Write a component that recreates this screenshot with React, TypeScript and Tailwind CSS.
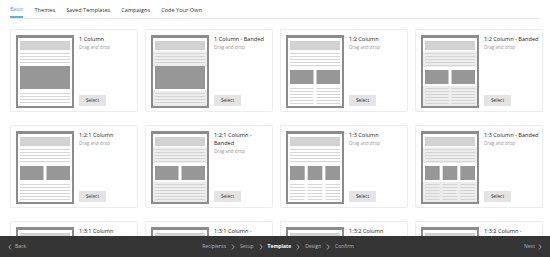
import React from "react";

type Thumb = { banded?: boolean; top: number; bottom: number };

const tabs = ["Basic", "Themes", "Saved Templates", "Campaigns", "Code Your Own"];

const templates: { name: string; thumb: Thumb }[] = [
  { name: "1 Column", thumb: { top: 1, bottom: 1 } },
  { name: "1 Column - Banded", thumb: { banded: true, top: 1, bottom: 1 } },
  { name: "1:2 Column", thumb: { top: 2, bottom: 2 } },
  { name: "1:2 Column - Banded", thumb: { banded: true, top: 2, bottom: 2 } },
  { name: "1:2:1 Column", thumb: { top: 2, bottom: 1 } },
  { name: "1:2:1 Column - Banded", thumb: { banded: true, top: 2, bottom: 1 } },
  { name: "1:3 Column", thumb: { top: 3, bottom: 3 } },
  { name: "1:3 Column - Banded", thumb: { banded: true, top: 3, bottom: 3 } },
  { name: "1:3:1 Column", thumb: { top: 3, bottom: 1 } },
  { name: "1:3:1 Column - Banded", thumb: { banded: true, top: 3, bottom: 1 } },
  { name: "1:3:2 Column", thumb: { top: 3, bottom: 2 } },
  { name: "1:3:2 Column - Banded", thumb: { banded: true, top: 3, bottom: 2 } },
];

const steps = ["Recipients", "Setup", "Template", "Design", "Confirm"];

// splits the inner width (4..54) into n columns with a 3px gutter
const columns = (n: number) => {
  const w = (50 - 3 * (n - 1)) / n;
  return Array.from({ length: n }, (_, i) => ({ x: 4 + i * (w + 3), w }));
};

function Lines({ ys, cols }: { ys: number[]; cols: number }) {
  return (
    <>
      {columns(cols).map((c, i) =>
        ys.map((y) => <rect key={`${i}-${y}`} x={c.x} y={y} width={c.w} height={1} fill="#d6d6d6" />)
      )}
    </>
  );
}

function Thumbnail({ banded, top, bottom }: Thumb) {
  const single = top === 1;
  const blockY = single ? 31 : 35;
  const blockH = single ? 23 : 14;
  const upper = single ? [18, 21, 24, 27] : [18, 21, 24, 27, 30];
  const lower = single ? [58, 61, 64, 67] : [53, 56, 59, 62, 65, 68];
  return (
    <svg width="58" height="73" viewBox="0 0 58 73" className="shrink-0">
      <rect x="0" y="0" width="58" height="73" fill="#8c8c8c" />
      <rect x="2" y="3" width="54" height="68" fill="#fff" />
      {banded && (
        <>
          <rect x="2" y="16.5" width="54" height="15.5" fill="#ececec" />
          <rect x="2" y={single ? 56 : 51} width="54" height={single ? 15 : 20} fill="#ececec" />
        </>
      )}
      <rect x="4" y="6" width="50" height="9" fill="#d2d2d2" />
      <Lines ys={upper} cols={1} />
      {columns(top).map((c, i) => (
        <rect key={i} x={c.x} y={blockY} width={c.w} height={blockH} fill="#979797" />
      ))}
      <Lines ys={lower} cols={bottom} />
    </svg>
  );
}

function Chevron({ left, className }: { left?: boolean; className?: string }) {
  return (
    <svg width="4" height="6" viewBox="0 0 4 6" className={className}>
      <path d={left ? "M3 0.5 L0.8 3 L3 5.5" : "M1 0.5 L3.2 3 L1 5.5"} fill="none" stroke="currentColor" strokeWidth="0.8" />
    </svg>
  );
}

export default function App() {
  return (
    <div className="relative h-[257px] w-[550px] overflow-hidden bg-white font-['Open_Sans',sans-serif] text-[#333]">
      <div className="mx-[10px] flex h-[19px] items-center gap-[11px] border-b border-[#e6e6e6] text-[5.6px]">
        {tabs.map((t, i) => (
          <div
            key={t}
            className={
              i === 0
                ? "flex h-full items-center border-b-2 border-[#5db3e0] pt-[2px] text-[#4ba6d9]"
                : "flex h-full items-center pt-[2px]"
            }
          >
            {t}
          </div>
        ))}
      </div>

      <div className="grid grid-cols-4 gap-x-[7px] gap-y-[13px] pl-[10px] pr-[7px] pt-[10px]">
        {templates.map((tpl) => (
          <div key={tpl.name} className="flex h-[83px] gap-[5px] rounded-[2px] border border-[#ececec] p-[5px] pr-[2px]">
            <Thumbnail {...tpl.thumb} />
            <div className="flex min-w-0 flex-1 flex-col">
              <div className="text-[5.6px] leading-[8px] text-[#222]">{tpl.name}</div>
              <div className="mt-[1px] text-[4.6px] leading-[7px] text-[#999]">Drag and drop</div>
              <button className="mt-auto h-[11px] w-[27px] bg-[#e4e4e4] text-[4.8px] leading-none text-[#333]">
                Select
              </button>
            </div>
          </div>
        ))}
      </div>

      <div className="fixed bottom-0 left-0 flex h-[21px] w-[550px] items-center bg-[#353535] px-[8px] text-[5px] text-[#b5b5b5]">
        <div className="flex flex-1 items-center gap-[3px]">
          <Chevron left />
          <span>Back</span>
        </div>
        <div className="flex items-center gap-[5px] pl-[6px]">
          {steps.map((s, i) => (
            <React.Fragment key={s}>
              {i > 0 && <Chevron />}
              <span className={s === "Template" ? "font-bold text-white" : ""}>{s}</span>
            </React.Fragment>
          ))}
        </div>
        <div className="flex flex-1 items-center justify-end gap-[3px]">
          <span>Next</span>
          <Chevron />
        </div>
      </div>
    </div>
  );
}
